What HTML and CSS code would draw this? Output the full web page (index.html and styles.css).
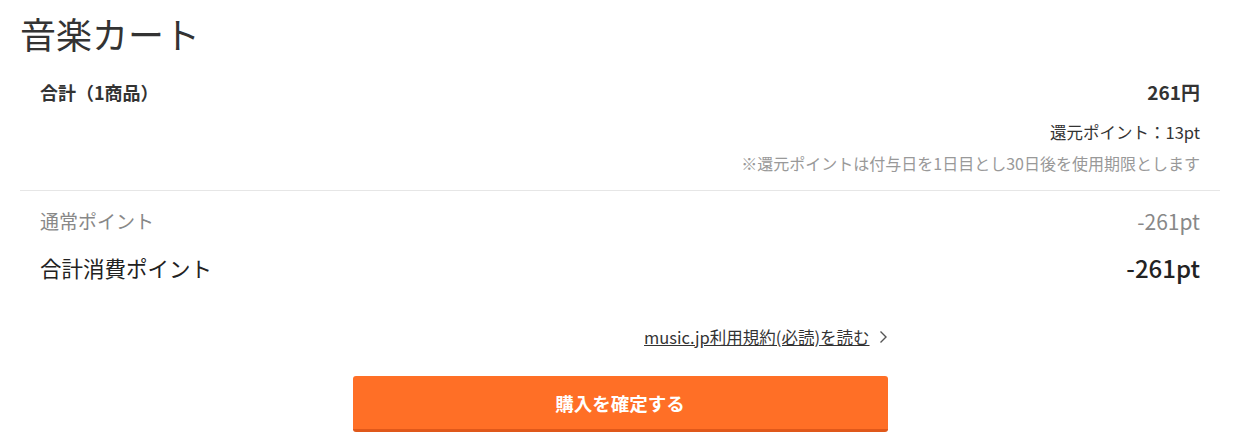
FILE: index.html
```
<!DOCTYPE html>
<html lang="ja">
<head>
    <meta charset="UTF-8">
    <meta name="viewport" content="width=device-width, initial-scale=1.0">
    <title>音楽カート</title>
    <link rel="stylesheet" href="styles.css">
</head>
<body>
    <div class="container">
        <h1>音楽カート</h1>

        <div class="summary">
            <div class="row total">
                <span>合計（1商品）</span>
                <span>261円</span>
            </div>
            <div class="reward">還元ポイント：13pt</div>
            <div class="note">※還元ポイントは付与日を1日目とし30日後を使用期限とします</div>
        </div>

        <div class="points">
            <div class="row normal">
                <span>通常ポイント</span>
                <span class="num">-261pt</span>
            </div>
            <div class="row consume">
                <span>合計消費ポイント</span>
                <span class="num">-261pt</span>
            </div>
        </div>

        <div class="actions">
            <div class="terms">
                <a href="#">music.jp利用規約(必読)を読む</a>
                <svg class="chevron" width="9" height="14" viewBox="0 0 9 14">
                    <path d="M1.5 1.5 L7 7 L1.5 12.5" fill="none" stroke="#555" stroke-width="1.4"/>
                </svg>
            </div>
            <button type="button">購入を確定する</button>
        </div>
    </div>
</body>
</html>
```

FILE: styles.css
```
body {
    margin: 0;
    font-family: "Noto Sans CJK JP", "Noto Sans", sans-serif;
    color: #333;
    background-color: #fff;
}
.container {
    width: 1200px;
    margin-left: 20px;
}
h1 {
    margin: 0;
    padding-top: 16px;
    font-size: 36px;
    line-height: 35px;
    font-weight: normal;
    color: #333;
}
.row {
    display: flex;
    justify-content: space-between;
    align-items: center;
}
.summary {
    margin-top: 29px;
    padding: 0 20px 16px;
    border-bottom: 1px solid #e6e6e6;
}
.total {
    font-size: 18px;
    line-height: 24px;
    font-weight: bold;
}
.total span:last-child {
    font-size: 19px;
}
.reward {
    margin-top: 16px;
    text-align: right;
    font-size: 16.5px;
    line-height: 24px;
}
.note {
    margin-top: 8px;
    text-align: right;
    font-size: 16px;
    line-height: 22px;
    color: #999;
}
.points {
    padding: 0 20px;
}
.normal {
    margin-top: 17px;
    font-size: 19px;
    line-height: 26px;
    color: #888;
}
.normal .num {
    font-size: 21px;
}
.consume {
    margin-top: 19px;
    font-size: 21.5px;
    line-height: 30px;
    color: #222;
}
.consume .num {
    font-size: 24px;
    font-weight: 500;
}
.actions {
    width: 535px;
    margin: 43px auto 0;
}
.terms {
    display: flex;
    justify-content: flex-end;
    align-items: center;
    gap: 9px;
    font-size: 16.5px;
    line-height: 22px;
}
.terms a {
    color: #333;
    text-decoration: underline;
}
.chevron {
    display: block;
}
button {
    display: block;
    width: 100%;
    height: 56px;
    margin-top: 28px;
    padding: 0;
    background-color: #ff6f26;
    color: #fff;
    border: none;
    border-bottom: 3px solid #e0581a;
    border-radius: 3px;
    font-family: inherit;
    font-size: 18.5px;
    font-weight: bold;
    cursor: pointer;
}
```
